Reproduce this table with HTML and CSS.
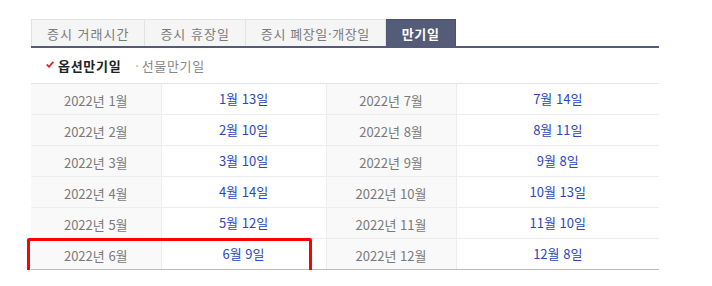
FILE: index.html
```html
<!DOCTYPE html>
<html lang="ko">
<head>
<meta charset="utf-8">
<link rel="stylesheet" href="styles.css">
</head>
<body>
<div class="wrap">
  <ul class="tabs">
    <li class="tab">증시 거래시간</li>
    <li class="tab">증시 휴장일</li>
    <li class="tab long">증시 폐장일·개장일</li>
    <li class="tab active">만기일</li>
  </ul>
  <div class="subnav">
    <span class="sub on"><svg class="check" width="8" height="7" viewBox="0 0 8 7"><path d="M0.8 3.4 L3 5.8 L7.3 0.8" fill="none" stroke="#e4262c" stroke-width="1.8"/></svg>옵션만기일</span>
    <span class="sub off"><span class="dot">·</span>선물만기일</span>
  </div>
  <div class="tablewrap">
    <table class="exp">
      <colgroup>
        <col class="c1"><col class="c2"><col class="c3"><col class="c4">
      </colgroup>
      <tbody>
        <tr><th>2022년 1월</th><td>1월 13일</td><th>2022년 7월</th><td>7월 14일</td></tr>
        <tr><th>2022년 2월</th><td>2월 10일</td><th>2022년 8월</th><td>8월 11일</td></tr>
        <tr><th>2022년 3월</th><td>3월 10일</td><th>2022년 9월</th><td>9월 8일</td></tr>
        <tr><th>2022년 4월</th><td>4월 14일</td><th>2022년 10월</th><td>10월 13일</td></tr>
        <tr><th>2022년 5월</th><td>5월 12일</td><th>2022년 11월</th><td>11월 10일</td></tr>
        <tr><th>2022년 6월</th><td>6월 9일</td><th>2022년 12월</th><td>12월 8일</td></tr>
      </tbody>
    </table>
    <div class="highlight"></div>
  </div>
</div>
</body>
</html>
```
FILE: styles.css
```css
* { box-sizing: border-box; }
html, body { margin: 0; padding: 0; background: #fff; }
body {
  font-family: "Noto Sans CJK KR", "Noto Sans", sans-serif;
  font-size: 13px;
  color: #777;
}
.wrap {
  width: 628px;
  margin: 19px 0 0 31px;
}
.tabs {
  list-style: none;
  margin: 0;
  padding: 0;
  display: flex;
  border-bottom: 2px solid #535b77;
}
.tab {
  height: 27px;
  line-height: 27px;
  padding: 0 15px;
  background: #f5f5f5;
  border: 1px solid #e2e2e2;
  border-bottom: 0;
  border-left: 0;
  color: #7a7a7a;
  white-space: nowrap;
  letter-spacing: 1px;
}
.tab:first-child { border-left: 1px solid #e2e2e2; }
.tab.long { letter-spacing: 0.6px; }
.tab.active {
  background: #545c78;
  border-color: #4a5270;
  color: #fff;
  font-weight: bold;
  padding: 0 15px 0 16px;
  letter-spacing: 0.6px;
}
.subnav {
  height: 35px;
  display: flex;
  align-items: center;
  padding: 0 0 0 15px;
  gap: 14px;
}
.sub { display: inline-flex; align-items: center; letter-spacing: 0.7px; }
.sub.on { color: #222; font-weight: bold; }
.sub.off { color: #888; }
.check { margin-right: 4px; margin-top: -2px; }
.dot { margin-right: 2px; color: #aaa; }
.tablewrap { position: relative; }
.exp {
  width: 628px;
  border-collapse: collapse;
  table-layout: fixed;
  border-top: 1px solid #e3e3e3;
  border-bottom: 1px solid #bbb;
}
.c1 { width: 130px; }
.c2 { width: 165px; }
.c3 { width: 130px; }
.c4 { width: 203px; }
.exp th, .exp td {
  height: 31px;
  padding: 0;
  text-align: center;
  font-weight: normal;
  border-bottom: 1px solid #ededed;
  border-right: 1px solid #ededed;
}
.exp tr:last-child th, .exp tr:last-child td { border-bottom: 1px solid #bbb; }
.exp th { background: #f9f9f9; color: #7a7a7a; padding-top: 2px; }
.exp td { background: #fff; color: #2a47c2; padding-bottom: 1px; }
.exp td:last-child { border-right: 0; }
.highlight {
  position: absolute;
  left: -4px;
  top: 155px;
  width: 285px;
  height: 42px;
  border: 3px solid #ff0000;
  border-radius: 2px;
}
```
